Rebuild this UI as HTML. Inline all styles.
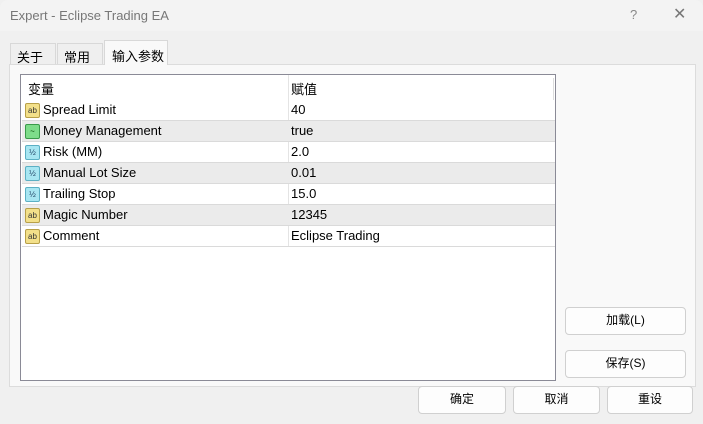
<!DOCTYPE html><html><head><style>
*{box-sizing:border-box;margin:0;padding:0}
body{width:703px;height:424px;background:#f0f0f0;font-family:"Liberation Sans","Noto Sans CJK SC",sans-serif;font-size:13px;color:#000;position:relative;overflow:hidden}
.a{position:absolute}
.title{left:0;top:0;width:703px;height:31px;background:#f3f3f3;border-radius:8px 8px 0 0}
.btn{position:absolute;background:#fdfdfd;border:1px solid #d0d0d0;border-radius:4px;text-align:center;line-height:25px;font-size:12px}
.row{position:absolute;left:1px;width:533px;height:21px;border-bottom:1px solid #dadada;line-height:20px}
.row.g{background:#ebebeb}
.row span.n{position:absolute;left:21px}
.row span.v{position:absolute;left:269px}
.row i{position:absolute;left:3px;top:3px;width:15px;height:15px;border-radius:2px;font-style:normal;font-size:8px;line-height:14px;text-align:center}
.ab{background:#f3e08a;border:1px solid #b8a048;color:#333}
.h{background:#a8e6f2;border:1px solid #5cb0c4;color:#246}
.m{background:#7edc8a;border:1px solid #3a9a4a;color:#040}
</style></head><body>
<div class="a title"></div>
<div class="a" style="left:10px;top:8px;color:#777;font-size:13px">Expert - Eclipse Trading EA</div>
<div class="a" style="left:630px;top:7px;color:#888;font-size:13px">?</div>
<div class="a" style="left:673px;top:4px;color:#777;font-size:16px;font-weight:300">✕</div>
<div class="a" style="left:10px;top:43px;width:46px;height:21px;border:1px solid #d8d8d8;border-bottom:none;background:#efefef;padding:3px 0 0 6px">关于</div>
<div class="a" style="left:57px;top:43px;width:46px;height:21px;border:1px solid #d8d8d8;border-bottom:none;background:#efefef;padding:3px 0 0 6px">常用</div>
<div class="a" style="left:104px;top:40px;width:64px;height:25px;border:1px solid #d8d8d8;border-bottom:none;background:#f9f9f9;padding:5px 0 0 7px;z-index:2">输入参数</div>
<div class="a" style="left:9px;top:64px;width:687px;height:323px;background:#f9f9f9;border:1px solid #dcdcdc"></div>
<div class="a" style="left:20px;top:74px;width:536px;height:307px;background:#fff;border:1px solid #8a8a96">
<div class="a" style="left:7px;top:4px">变量</div>
<div class="a" style="left:267px;top:0;width:1px;height:172px;background:#e4e4e4"></div>
<div class="a" style="left:270px;top:4px">赋值</div>
<div class="a" style="left:532px;top:3px;width:1px;height:22px;background:#ddd"></div>
<div class="row" style="top:25px"><i class="ab">ab</i><span class="n">Spread Limit</span><span class="v">40</span></div>
<div class="row g" style="top:46px"><i class="m">~</i><span class="n">Money Management</span><span class="v">true</span></div>
<div class="row" style="top:67px"><i class="h">½</i><span class="n">Risk (MM)</span><span class="v">2.0</span></div>
<div class="row g" style="top:88px"><i class="h">½</i><span class="n">Manual Lot Size</span><span class="v">0.01</span></div>
<div class="row" style="top:109px"><i class="h">½</i><span class="n">Trailing Stop</span><span class="v">15.0</span></div>
<div class="row g" style="top:130px"><i class="ab">ab</i><span class="n">Magic Number</span><span class="v">12345</span></div>
<div class="row" style="top:151px"><i class="ab">ab</i><span class="n">Comment</span><span class="v">Eclipse Trading</span></div>
</div>
<div class="btn" style="left:565px;top:307px;width:121px;height:28px">加载(L)</div>
<div class="btn" style="left:565px;top:350px;width:121px;height:28px">保存(S)</div>
<div class="btn" style="left:418px;top:386px;width:88px;height:28px">确定</div>
<div class="btn" style="left:513px;top:386px;width:87px;height:28px">取消</div>
<div class="btn" style="left:607px;top:386px;width:86px;height:28px">重设</div>
</body></html>
